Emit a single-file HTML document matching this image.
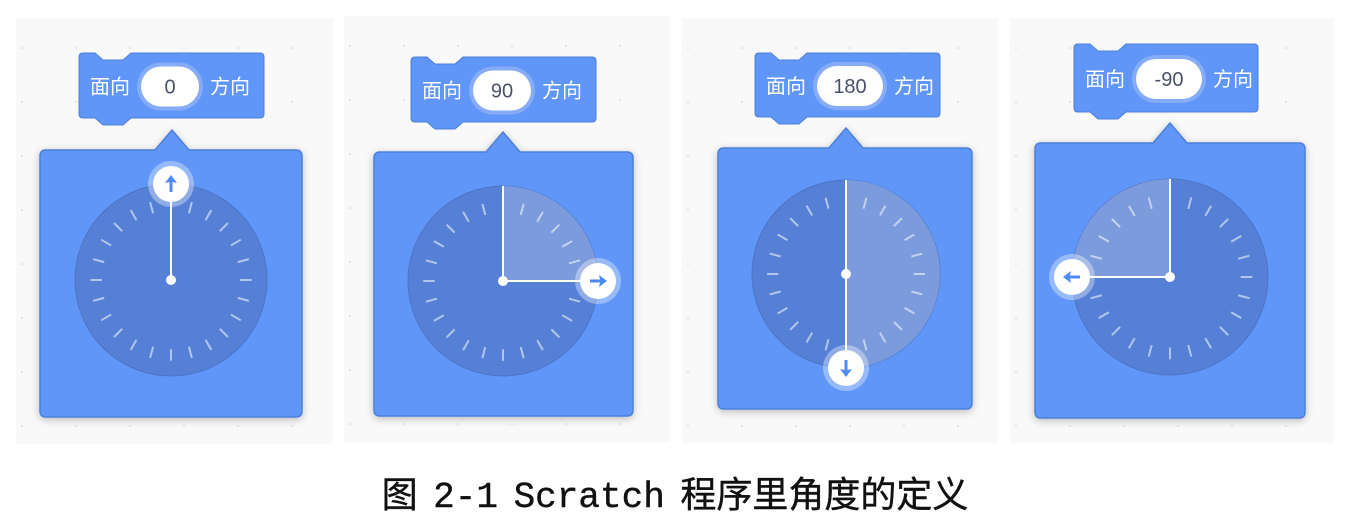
<!DOCTYPE html>
<html><head><meta charset="utf-8"><style>
body{margin:0;width:1350px;height:522px;background:#fff;overflow:hidden;position:relative;font-family:"Liberation Sans","Noto Sans CJK SC",sans-serif}
svg{position:absolute;left:0;top:0}
.cap{position:absolute;left:0;width:1350px;top:466px;text-align:center;font-size:36px;font-family:"Liberation Mono","Noto Sans CJK SC",monospace;color:#111;word-spacing:-6px;-webkit-text-stroke:0.4px #111}
</style></head><body>
<svg id="s" width="1350" height="522" xmlns="http://www.w3.org/2000/svg">
<defs><filter id="sh" x="-20%" y="-20%" width="140%" height="140%"><feDropShadow dx="0" dy="2" stdDeviation="4" flood-color="#000" flood-opacity="0.25"/></filter></defs>
</svg>
<div class="cap">图 2-1 Scratch 程序里角度的定义</div>
<script>
var P=[
{bg:[16,18,333,444],blk:[79,53,264,118],val:"0",pop:[40,150,302,417],ax:172,cx:171,cy:280,r:96,ang:0},
{bg:[344,16,670,442],blk:[411,57,596,122],val:"90",pop:[374,152,633,416],ax:503,cx:503,cy:281,r:95,ang:90},
{bg:[682,18,998,443],blk:[755,53,940,117],val:"180",pop:[718,148,972,409],ax:846,cx:846,cy:274,r:94,ang:180},
{bg:[1010,18,1334,443],blk:[1074,44,1258,112],val:"-90",pop:[1035,143,1305,418],ax:1170,cx:1170,cy:277,r:98,ang:-90}];
var h="";
P.forEach(function(p){
 var b=p.bg;h+='<rect x="'+b[0]+'" y="'+b[1]+'" width="'+(b[2]-b[0])+'" height="'+(b[3]-b[1])+'" fill="#f9f9f9"/>';
 for(var x=b[0]+6;x<b[2];x+=54)for(var y=b[1]+30;y<b[3];y+=54)h+='<circle cx="'+x+'" cy="'+y+'" r="0.8" fill="#ccc"/>';
 var k=p.blk,x0=k[0],y0=k[1],x1=k[2],y1=k[3];
 var d='M'+(x0+4)+','+y0+' h12 l8,7 h20 l8,-7 H'+(x1-4)+' q4,0 4,4 V'+(y1-4)+' q0,4 -4,4 H'+(x0+52)+' l-8,7 h-20 l-8,-7 H'+(x0+4)+' q-4,0 -4,-4 V'+(y0+4)+' q0,-4 4,-4z';
 h+='<path d="'+d+'" fill="#6096f8" stroke="#4d7fd9" stroke-width="1"/>';
 var my=(y0+y1)/2+1;
 h+='<text x="'+(x0+11)+'" y="'+(my+7)+'" font-size="20" fill="#fff">面向</text>';
 var iw=p.val.length>2?66:58, ix=x0+62;
 h+='<rect x="'+(ix-4)+'" y="'+(my-24)+'" width="'+(iw+8)+'" height="48" rx="24" fill="#86acf8"/>';
 h+='<rect x="'+ix+'" y="'+(my-20)+'" width="'+iw+'" height="40" rx="20" fill="#fff"/>';
 h+='<text x="'+(ix+iw/2)+'" y="'+(my+7)+'" font-size="20" fill="#4a5068" text-anchor="middle">'+p.val+'</text>';
 h+='<text x="'+(ix+iw+11)+'" y="'+(my+7)+'" font-size="20" fill="#fff">方向</text>';
 var q=p.pop;
 h+='<path filter="url(#sh)" d="M'+(q[0]+6)+','+q[1]+' H'+(p.ax-17)+' L'+p.ax+','+(q[1]-20)+' L'+(p.ax+17)+','+q[1]+' H'+(q[2]-6)+' q6,0 6,6 V'+(q[3]-6)+' q0,6 -6,6 H'+(q[0]+6)+' q-6,0 -6,-6 V'+(q[1]+6)+' q0,-6 6,-6z" fill="#6096f8" stroke="#4d7fd9" stroke-width="1.5"/>';
 var cx=p.cx,cy=p.cy,r=p.r;
 h+='<circle cx="'+cx+'" cy="'+cy+'" r="'+r+'" fill="#5580d6" stroke="#4c74c8" stroke-width="1"/>';
 var a=p.ang;
 if(a!=0){var rad=a*Math.PI/180,ex=cx+r*Math.sin(rad),ey=cy-r*Math.cos(rad);
  h+='<path d="M'+cx+','+cy+' L'+cx+','+(cy-r)+' A'+r+','+r+' 0 0 '+(a>0?1:0)+' '+ex+','+ey+'z" fill="#7b9bdc"/>';}
 for(var i=0;i<24;i++){var t=i*15*Math.PI/180,s=Math.sin(t),c=Math.cos(t);
  h+='<line x1="'+(cx+s*r*0.72)+'" y1="'+(cy-c*r*0.72)+'" x2="'+(cx+s*r*0.84)+'" y2="'+(cy-c*r*0.84)+'" stroke="rgba(255,255,255,0.55)" stroke-width="2"/>';}
 var rad=a*Math.PI/180,hx=cx+r*Math.sin(rad),hy=cy-r*Math.cos(rad);
 if(a!=0)h+='<line x1="'+cx+'" y1="'+cy+'" x2="'+cx+'" y2="'+(cy-r)+'" stroke="#fff" stroke-width="2"/>';
 h+='<line x1="'+cx+'" y1="'+cy+'" x2="'+hx+'" y2="'+hy+'" stroke="#fff" stroke-width="2"/>';
 h+='<circle cx="'+cx+'" cy="'+cy+'" r="5" fill="#fff"/>';
 h+='<circle cx="'+hx+'" cy="'+hy+'" r="23" fill="rgba(255,255,255,0.35)"/><circle cx="'+hx+'" cy="'+hy+'" r="18" fill="#fff"/>';
 h+='<g transform="translate('+hx+','+hy+') rotate('+a+')"><path d="M0,-9 L6,-1 L1.5,-2 L1.5,8 L-1.5,8 L-1.5,-2 L-6,-1z" fill="#4c8af5"/></g>';
});
document.getElementById('s').insertAdjacentHTML('beforeend',h);
</script>
</body></html>
